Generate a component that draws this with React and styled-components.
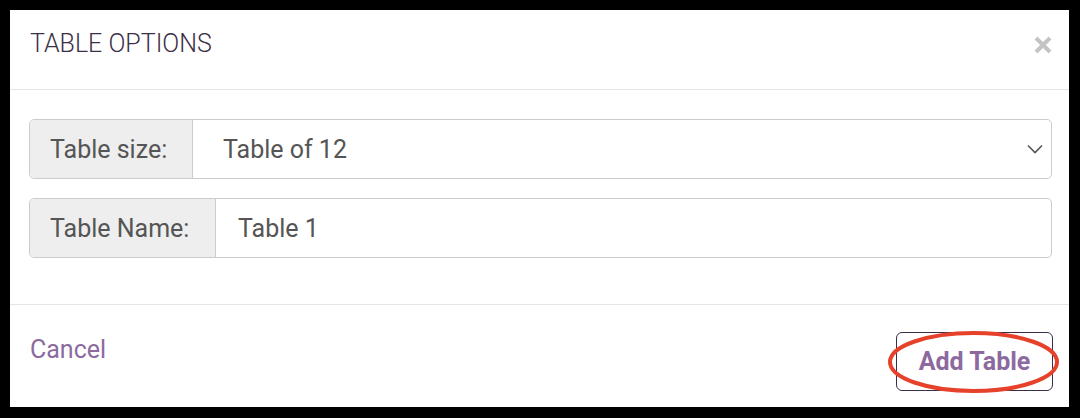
import React from 'react'
import styled, { createGlobalStyle } from 'styled-components'

const Global = createGlobalStyle`
  html, body {
    margin: 0;
    padding: 0;
    background: #000;
  }
  body {
    font-family: Roboto, "Liberation Sans", Arial, sans-serif;
    padding: 10px 11px 11px 10px;
    box-sizing: border-box;
    height: 418px;
    overflow: hidden;
  }
  * { box-sizing: border-box; }
`

const Modal = styled.div`
  background: #fff;
  width: 1059px;
  height: 397px;
  display: flex;
  flex-direction: column;
`

const Header = styled.div`
  height: 80px;
  border-bottom: 1px solid #e5e5e5;
  display: flex;
  align-items: center;
  justify-content: space-between;
  padding: 0 17px 0 20px;
`

const Title = styled.h4`
  margin: 0;
  font-size: 25px;
  font-weight: 300;
  color: #3c2f47;
  padding-bottom: 12px;
`

const Close = styled.button`
  border: 0;
  background: none;
  padding: 0;
  margin-top: -10px;
  display: flex;
  cursor: pointer;
`

const Body = styled.div`
  height: 215px;
  border-bottom: 1px solid #e5e5e5;
  padding: 29px 17px 0 19px;
  display: flex;
  flex-direction: column;
  gap: 19px;
`

const Group = styled.div`
  display: flex;
  height: 60px;
  border: 1px solid #cccccc;
  border-radius: 5px;
  overflow: hidden;
`

const Addon = styled.div`
  width: ${p => p.$w}px;
  flex-shrink: 0;
  background: #eeeeee;
  border-right: 1px solid #cccccc;
  display: flex;
  align-items: center;
  padding: 0 20px;
  font-size: 25px;
  color: #555555;
`

const Field = styled.div`
  flex: 1;
  display: flex;
  align-items: center;
  justify-content: space-between;
  padding: 0 8px 0 ${p => p.$pad}px;
  font-size: 25px;
  color: #555555;
`

const Footer = styled.div`
  flex: 1;
  display: flex;
  align-items: center;
  justify-content: space-between;
  padding: 0 16px 0 20px;
`

const Cancel = styled.a`
  font-size: 25px;
  color: #8c6aa0;
  margin-top: -14px;
  cursor: pointer;
`

const AddWrap = styled.div`
  position: relative;
  margin-top: 10px;
`

const AddButton = styled.button`
  width: 157px;
  height: 59px;
  border: 1px solid #3d2d4a;
  border-radius: 6px;
  background: #fff;
  font-family: Roboto, "Liberation Sans", Arial, sans-serif;
  font-size: 25px;
  font-weight: 700;
  color: #8c6aa0;
  padding: 0;
  cursor: pointer;
`

const Ring = styled.svg`
  position: absolute;
  left: -8px;
  top: -1px;
  pointer-events: none;
`

export default function App() {
  return (
    <>
      <Global />
      <Modal>
        <Header>
          <Title>TABLE OPTIONS</Title>
          <Close aria-label="close">
            <svg width="18" height="18" viewBox="0 0 18 18">
              <path d="M2 2 L16 16 M16 2 L2 16" stroke="#c4c4c4" strokeWidth="4" />
            </svg>
          </Close>
        </Header>
        <Body>
          <Group>
            <Addon $w={163}>Table size:</Addon>
            <Field $pad={30}>
              Table of 12
              <svg width="16" height="10" viewBox="0 0 16 10">
                <path d="M1 1.5 L8 8.5 L15 1.5" fill="none" stroke="#555" strokeWidth="1.6" />
              </svg>
            </Field>
          </Group>
          <Group>
            <Addon $w={186}>Table Name:</Addon>
            <Field $pad={22}>Table 1</Field>
          </Group>
        </Body>
        <Footer>
          <Cancel>Cancel</Cancel>
          <AddWrap>
            <AddButton>Add Table</AddButton>
            <Ring width="171" height="62" viewBox="0 0 171 62">
              <ellipse cx="85.5" cy="31" rx="83.5" ry="29" fill="none" stroke="#e6412b" strokeWidth="4" />
            </Ring>
          </AddWrap>
        </Footer>
      </Modal>
    </>
  )
}
